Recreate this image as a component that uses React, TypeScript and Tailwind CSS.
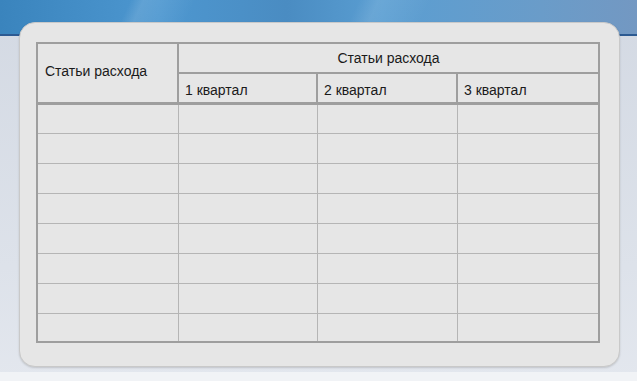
import React from 'react';

const quarters = ['1 квартал', '2 квартал', '3 квартал'];
const bodyRows = Array.from({ length: 8 }, (_, i) => i);

export default function App() {
    return (
        <div className="relative w-[637px] h-[381px] overflow-hidden bg-[linear-gradient(180deg,#d3d9e3_0%,#dde2ea_70%,#e3e7ee_100%)] font-['Liberation_Sans',Arial,sans-serif]">
            {/* шапка окна */}
            <div className="absolute inset-x-0 top-0 h-[36px] bg-[linear-gradient(90deg,#3a84bd_0%,#4d97d0_25%,#4a8cc2_45%,#5a9ed2_60%,#6a9cc9_85%,#7398c2_100%)] border-b-2 border-[#2c5a92]">
                <div className="absolute inset-0 bg-[linear-gradient(115deg,transparent_0%,transparent_20%,rgba(255,255,255,0.12)_22%,transparent_30%,transparent_55%,rgba(255,255,255,0.1)_58%,transparent_66%)]" />
            </div>
            <div className="absolute inset-x-0 bottom-0 h-[9px] bg-[#f1f3f6]" />

            {/* карточка с таблицей */}
            <div className="relative ml-[19px] mt-[22px] w-[601px] h-[345px] rounded-[16px] bg-[#e6e6e6] border border-[#c9c9c9] shadow-[0_1px_2px_rgba(0,0,0,0.15)] pl-[16px] pt-[19px]">
                <table className="table-fixed border-collapse w-[562px] text-[14px] text-[#1a1a1a] border-2 border-[#9e9e9e]">
                    <colgroup>
                        <col className="w-[141px]" />
                        <col className="w-[139px]" />
                        <col className="w-[140px]" />
                        <col className="w-[142px]" />
                    </colgroup>
                    <thead>
                        <tr className="h-[30px]">
                            <th
                                rowSpan={2}
                                className="border-2 border-b-[3px] border-[#9e9e9e] text-left font-normal pl-[7px] pb-[2px]"
                            >
                                Статьи расхода
                            </th>
                            <th colSpan={3} className="border-2 border-[#9e9e9e] font-normal text-center">
                                Статьи расхода
                            </th>
                        </tr>
                        <tr className="h-[30px]">
                            {quarters.map((q) => (
                                <th
                                    key={q}
                                    className="border-2 border-b-[3px] border-[#9e9e9e] font-normal text-left pl-[6px] pt-[5px]"
                                >
                                    {q}
                                </th>
                            ))}
                        </tr>
                    </thead>
                    <tbody>
                        {bodyRows.map((r) => (
                            <tr key={r} className={r === 7 ? 'h-[29px]' : 'h-[30px]'}>
                                {[0, 1, 2, 3].map((c) => (
                                    <td key={c} className="border border-[#b5b5b5]" />
                                ))}
                            </tr>
                        ))}
                    </tbody>
                </table>
            </div>
        </div>
    );
}
